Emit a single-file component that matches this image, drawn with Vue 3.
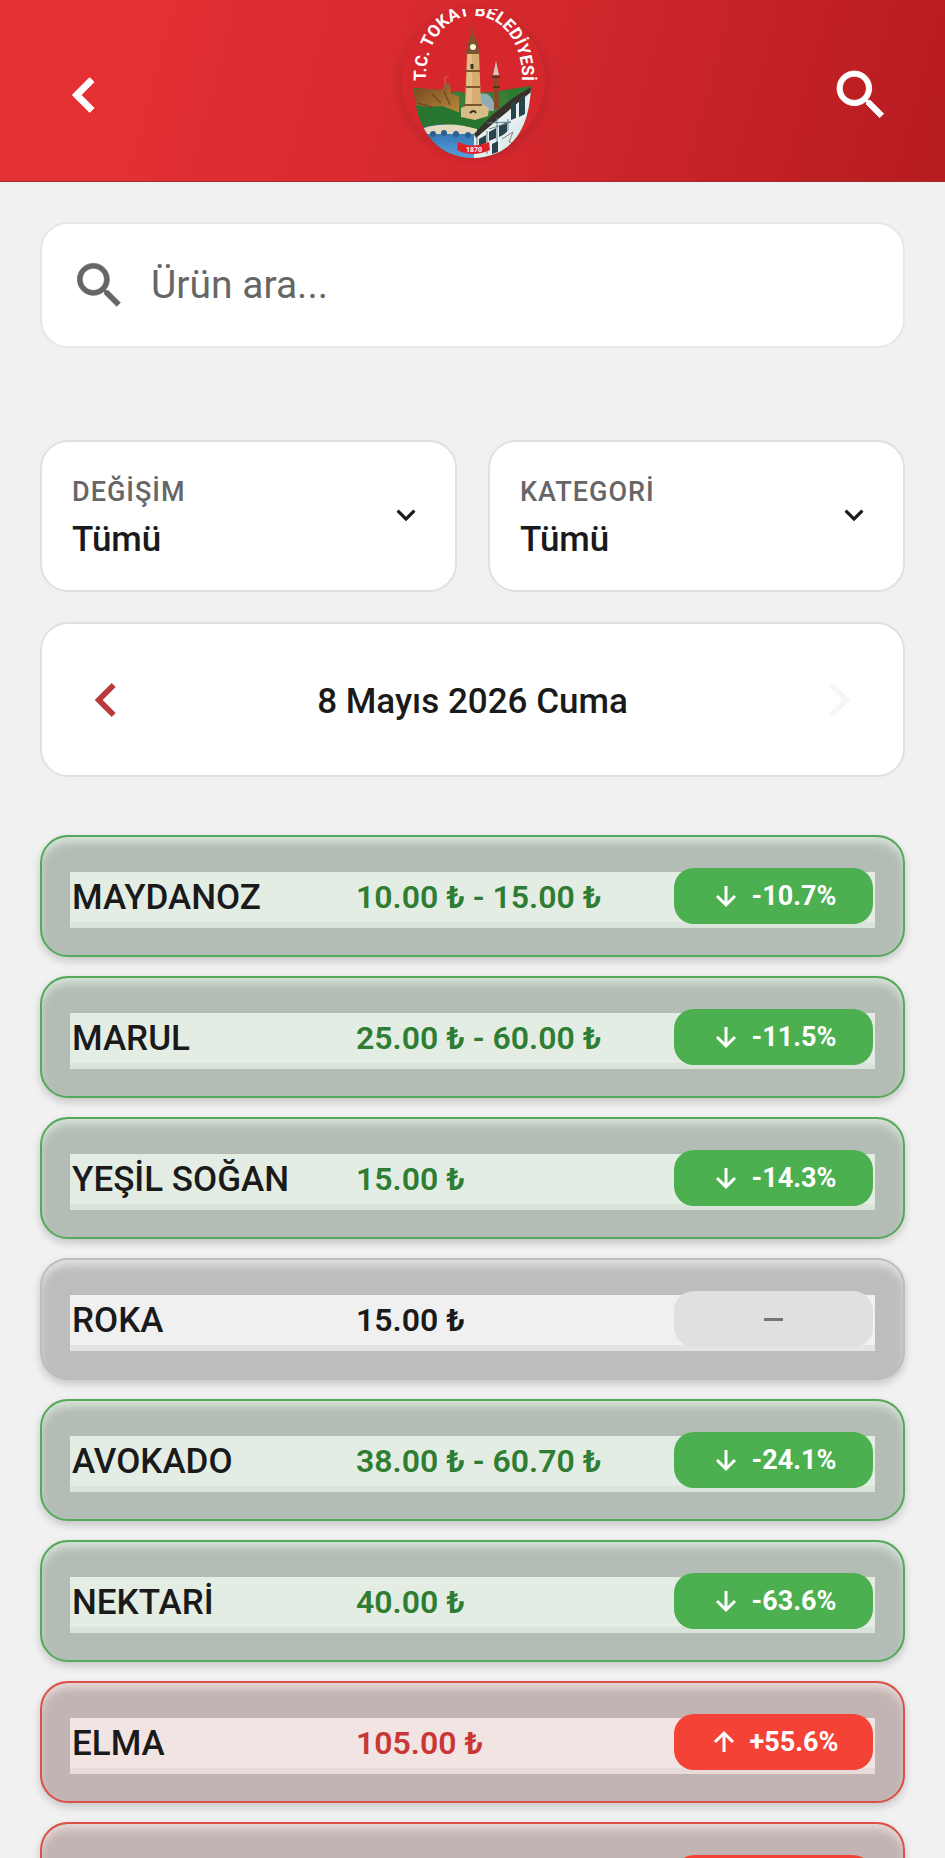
<template>
  <div class="page">
    <header class="header">
      <button class="icon-btn" type="button" aria-label="Geri">
        <svg class="icon-nav" viewBox="0 0 24 24" fill="currentColor" stroke="currentColor" stroke-width="0.4" stroke-linejoin="round">
          <path d="M15.41 7.41 14 6l-6 6 6 6 1.41-1.41L10.83 12z" />
        </svg>
      </button>

      <svg class="logo" viewBox="-2 0 190 182" role="img" aria-label="Tokat Belediyesi">
        <defs>
          <path id="logo-arc" d="M46 84 C42 -7 146 -7 142 84" />
          <clipPath id="logo-top"><rect x="0" y="9" width="190" height="173" /></clipPath>
          <clipPath id="logo-scene"><path d="M34 88 L62 90 L95 20 L125 55 L151 86 C150 118 140 142 117 153 Q93 163 69 153 C46 142 35 116 34 88Z" /></clipPath>
          <radialGradient id="logo-glow">
            <stop offset="0.82" stop-color="#8e1c22" stop-opacity="0.3" />
            <stop offset="1" stop-color="#8e1c22" stop-opacity="0" />
          </radialGradient>
          <linearGradient id="logo-river" x1="0" y1="0" x2="0" y2="1">
            <stop offset="0" stop-color="#2768aa" />
            <stop offset="1" stop-color="#5ba5df" />
          </linearGradient>
          <linearGradient id="logo-castle" x1="0" y1="0" x2="1" y2="1">
            <stop offset="0" stop-color="#75451f" />
            <stop offset="1" stop-color="#b98d3f" />
          </linearGradient>
        </defs>
        <circle cx="93" cy="84" r="82" fill="url(#logo-glow)" />
        <circle cx="93" cy="81" r="72" fill="#d6272d" />
        <g clip-path="url(#logo-scene)">
          <path d="M34 88 62 85 66 94 100 94 151 86V160H34z" fill="#2f7a31" />
          <path d="M67 94 78 91 90 95 104 92 116 94 128 91 128 116 66 116z" fill="#387f35" />
          <path d="M34 90 60 86 61 83 70 83 71 94 79 96V116H60L34 108z" fill="url(#logo-castle)" />
          <path d="M34 105 48 107 62 106 78 112 104 119 104 130 34 130z" fill="#27752e" />
          <path d="M37 103l15 4M52 94l9 9M64 91l6 14" stroke="#6f4d20" stroke-width="1.5" />
          <path d="M100 94 q10 -3 14 9 v8 H99z" fill="#8fabb5" />
          <path d="M81 108 92 103 101 103 109 108 108 116 95 120 81 117z" fill="#d8bd87" />
          <path d="M90 113q4-4 6 0" fill="none" stroke="#342d20" stroke-width="2" />
          <path d="M40 128 60 124 95 129 95 161 40 161z" fill="url(#logo-river)" />
          <path d="M44 128 C65 122 82 125 97 129 V134 H44z" fill="#e4d8bf" />
          <g fill="#2a5f90">
            <circle cx="53" cy="134" r="3" /><circle cx="64" cy="133" r="3" />
            <circle cx="76" cy="134" r="3" /><circle cx="88" cy="135" r="3" />
          </g>
          <path d="M94 135 116 116 151 90V161H94z" fill="#e7f0f0" />
          <path d="M94 134 112 115 133 98 151 87V92L116 121 96 138z" fill="#3a302b" />
          <path d="M131 104l5-4v18l-5 2zM139 99l6-5v20l-6 3zM119 126l8-4v11l-8 4zM109 132l7-4v10l-7 3zM112 144l6-3v11l-6 2zM99 139l7-4v8l-7 3z" fill="#29434c" />
          <path d="M107 123 131 122 109 129M128 119V151M107 131V154M117 118V142M97 137V150" fill="none" stroke="#5a8290" stroke-width="1" />
          <path d="M121 137 131 128 149 113V140L121 157z" fill="#dfecef" />
          <path d="M122 139 133 132 129 142 137 144 125 154" fill="none" stroke="#8a7a70" stroke-width="1" />
        </g>
        <path d="M86 54 88 43 91 35 92 26 94 35 98 44 99 54z" fill="#80572d" />
        <path d="M87 43H98V52H87z" fill="#755036" />
        <circle cx="93" cy="47" r="3" fill="#fff5cf" />
        <path d="M87 53H99L101 105H85z" fill="#d6ae72" />
        <path d="M88 54H92V104H86z" fill="#ecd09a" opacity="0.55" />
        <path d="M86 53H100M86 71H100M86 87H100M84 105H102" stroke="#7c572d" stroke-width="2" />
        <path d="M92 64v5" stroke="#443822" stroke-width="3" />
        <path d="M113 75 116 61 119 75z" fill="#d8c4bd" />
        <path d="M114 75H118L119 109H114z" fill="#884929" />
        <path d="M112 77h8M113 87h7" stroke="#573521" stroke-width="2" />
        <path d="M65 77V84M65 77h4" stroke="#d36765" stroke-width="1" />
        <path d="M78 142 Q93 149 109 142 L110 150 Q93 158 77 150z" fill="#df2029" />
        <text class="logo-year" x="94" y="152">1870</text>
        <g clip-path="url(#logo-top)">
          <text class="logo-name"><textPath href="#logo-arc" startOffset="50%">T.C. TOKAT BELEDİYESİ</textPath></text>
        </g>
      </svg>

      <button class="icon-btn" type="button" aria-label="Ara">
        <svg class="icon-search" viewBox="0 0 24 24" fill="currentColor" stroke="currentColor" stroke-width="0.3"><path :d="searchPath" /></svg>
      </button>
    </header>

    <main class="content">
      <label class="search card">
        <svg class="icon-field" viewBox="0 0 24 24" fill="currentColor" stroke="currentColor" stroke-width="0.3"><path :d="searchPath" /></svg>
        <input v-model="query" type="text" placeholder="Ürün ara..." aria-label="Ürün ara" />
      </label>

      <div class="filters">
        <label v-for="filter in filters" :key="filter.label" class="filter card">
          <span class="filter-body">
            <span class="filter-label">{{ filter.label }}</span>
            <select v-model="filter.value">
              <option>Tümü</option>
            </select>
          </span>
          <svg class="icon-expand" viewBox="0 0 24 24" fill="currentColor">
            <path d="M16.59 8.59 12 13.17 7.41 8.59 6 10l6 6 6-6z" />
          </svg>
        </label>
      </div>

      <div class="date card">
        <button class="icon-btn prev" type="button" aria-label="Önceki gün">
          <svg class="icon-nav" viewBox="0 0 24 24" fill="currentColor">
            <path d="M15.41 7.41 14 6l-6 6 6 6 1.41-1.41L10.83 12z" />
          </svg>
        </button>
        <span class="date-text">8 Mayıs 2026 Cuma</span>
        <button class="icon-btn next" type="button" aria-label="Sonraki gün" disabled>
          <svg class="icon-nav" viewBox="0 0 24 24" fill="currentColor">
            <path d="M8.59 16.59 13.17 12 8.59 7.41 10 6l6 6-6 6z" />
          </svg>
        </button>
      </div>

      <ul class="products">
        <li v-for="(item, index) in products" :key="index" class="product" :class="item.trend">
          <div class="product-row">
            <span class="name">{{ item.name }}</span>
            <span class="price">{{ item.price }}</span>
            <span class="badge">
              <svg v-if="item.trend !== 'same'" class="icon-arrow" viewBox="0 0 30 30" fill="none" stroke="currentColor" stroke-width="3">
                <path :d="item.trend === 'down' ? 'M15 5v19M6 15l9 9 9-9' : 'M15 25V6M6 15l9-9 9 9'" />
              </svg>
              <span v-if="item.trend !== 'same'">{{ item.change }}</span>
              <span v-else class="dash"></span>
            </span>
          </div>
        </li>
      </ul>
    </main>
  </div>
</template>

<script setup>
import { ref } from "vue";

const searchPath =
  "M15.5 14h-.79l-.28-.27C15.41 12.59 16 11.11 16 9.5 16 5.91 13.09 3 9.5 3S3 5.91 3 9.5 5.91 16 9.5 16c1.61 0 3.09-.59 4.23-1.57l.27.28v.79l5 4.99L20.49 19l-4.99-5zm-6 0C7.01 14 5 11.99 5 9.5S7.01 5 9.5 5 14 7.01 14 9.5 11.99 14 9.5 14z";

const query = ref("");

const filters = ref([
  { label: "DEĞİŞİM", value: "Tümü" },
  { label: "KATEGORİ", value: "Tümü" },
]);

const products = [
  { name: "MAYDANOZ", price: "10.00 ₺ - 15.00 ₺", change: "-10.7%", trend: "down" },
  { name: "MARUL", price: "25.00 ₺ - 60.00 ₺", change: "-11.5%", trend: "down" },
  { name: "YEŞİL SOĞAN", price: "15.00 ₺", change: "-14.3%", trend: "down" },
  { name: "ROKA", price: "15.00 ₺", change: "", trend: "same" },
  { name: "AVOKADO", price: "38.00 ₺ - 60.70 ₺", change: "-24.1%", trend: "down" },
  { name: "NEKTARİ", price: "40.00 ₺", change: "-63.6%", trend: "down" },
  { name: "ELMA", price: "105.00 ₺", change: "+55.6%", trend: "up" },
  { name: "", price: "", change: "", trend: "up" },
];
</script>

<style>
body {
  margin: 0;
  background: #f1f1f1;
}
</style>

<style scoped>
.page {
  height: 100vh;
  overflow: hidden;
  background: #f1f1f1;
  color: #1a1a1a;
  font-family: Roboto, "Noto Sans", sans-serif;
}
.page * {
  box-sizing: border-box;
}

/* HEADER */
.header {
  display: flex;
  justify-content: space-between;
  align-items: center;
  height: 182px;
  padding: 0 50px;
  background: linear-gradient(105deg, #e53134 10%, #d3282e 54%, #b71c20 98%);
  border-bottom: 1px solid #a52b30;
  color: #fff;
}
.header .icon-btn {
  margin-top: 8px;
}
.icon-btn {
  display: flex;
  justify-content: center;
  width: 68px;
  padding: 0;
  border: none;
  background: none;
  color: inherit;
}
svg {
  flex: none;
}
.icon-nav {
  width: 68px;
  height: 68px;
}
.icon-search {
  width: 64px;
  height: 64px;
}
.logo {
  width: 190px;
  height: 182px;
}
.logo-name {
  fill: #fff;
  font-size: 17px;
  font-weight: 700;
  text-anchor: middle;
}
.logo-year {
  fill: #fff;
  font-size: 7px;
  font-weight: 700;
  text-anchor: middle;
}

/* CONTENT */
.content {
  padding: 40px;
}
.card {
  display: flex;
  align-items: center;
  background: #fff;
  border: 2px solid #e0e0e0;
  border-radius: 28px;
}

.search {
  height: 126px;
  padding: 0 28px;
  gap: 22px;
  border-color: #e2e8ea;
}
.icon-field {
  width: 59px;
  height: 59px;
  color: #666;
}
.search input {
  flex: 1;
  min-width: 0;
  padding: 0;
  border: none;
  outline: none;
  background: none;
  color: #1a1a1a;
  font: 400 39px Roboto, "Noto Sans", sans-serif;
}
.search input::placeholder {
  color: #666;
  opacity: 1;
}

/* FILTERS */
.filters {
  display: grid;
  grid-template-columns: 1fr 1fr;
  gap: 31px;
  margin-top: 92px;
}
.filter {
  height: 152px;
  padding: 0 30px 2px;
}
.filter-body {
  display: flex;
  flex: 1;
  flex-direction: column;
}
.filter-label {
  color: #666;
  font-size: 27px;
  font-weight: 500;
  line-height: 48px;
  letter-spacing: 1px;
}
.filter select {
  appearance: none;
  width: 100%;
  height: 46px;
  padding: 0;
  border: none;
  outline: none;
  background: none;
  color: #1a1a1a;
  font: 500 35px Roboto, "Noto Sans", sans-serif;
}
.icon-expand {
  width: 38px;
  height: 38px;
}

/* DATE */
.date {
  justify-content: space-between;
  height: 155px;
  margin-top: 30px;
  padding: 0 30px;
  font-size: 35px;
  font-weight: 500;
}
.date-text {
  padding-top: 4px;
}
.prev {
  color: #b83a3a;
}
.next {
  color: #f6f6f6;
}

/* PRODUCTS */
.products {
  display: flex;
  flex-direction: column;
  gap: 19px;
  margin: 58px 0 0;
  padding: 0;
  list-style: none;
}
.product {
  padding: 35px 28px 27px;
  border: 2px solid var(--line);
  border-radius: 28px;
  background:
    linear-gradient(var(--band) 89%, var(--edge) 89%) content-box no-repeat,
    var(--frame) border-box;
  box-shadow: 0 4px 8px rgba(0, 0, 0, 0.18), inset 0 7px 8px -2px var(--edge);
}
.down {
  --line: #55a95a;
  --frame: #b3bdb5;
  --band: #e3ede4;
  --edge: #d9e5db;
  --accent: #4caf50;
  --price: #2e7d32;
}
.up {
  --line: #dc5048;
  --frame: #c2b4b2;
  --band: #f1e4e3;
  --edge: #e8dad9;
  --accent: #f44336;
  --price: #c93636;
}
.same {
  --line: transparent;
  --frame: #bdbdbd;
  --band: #f0f0f0;
  --edge: #e4e4e4;
  --accent: #e0e0e0;
  --price: #1a1a1a;
}
.product-row {
  display: grid;
  grid-template-columns: 284px 1fr 199px;
  align-items: center;
  height: 56px;
  margin: -4px 0 4px;
  padding: 0 2px;
}
.name,
.price {
  padding-top: 2px;
}
.name {
  font-size: 35px;
  font-weight: 500;
}
.price {
  color: var(--price);
  font-size: 32px;
  font-weight: 600;
}
.badge {
  display: flex;
  justify-content: center;
  align-items: center;
  gap: 11px;
  height: 56px;
  border-radius: 20px;
  background: var(--accent);
  color: #fff;
  font-size: 27px;
  font-weight: 700;
}
.icon-arrow {
  width: 30px;
  height: 30px;
}
.dash {
  width: 19px;
  height: 3px;
  background: #757575;
}
</style>
